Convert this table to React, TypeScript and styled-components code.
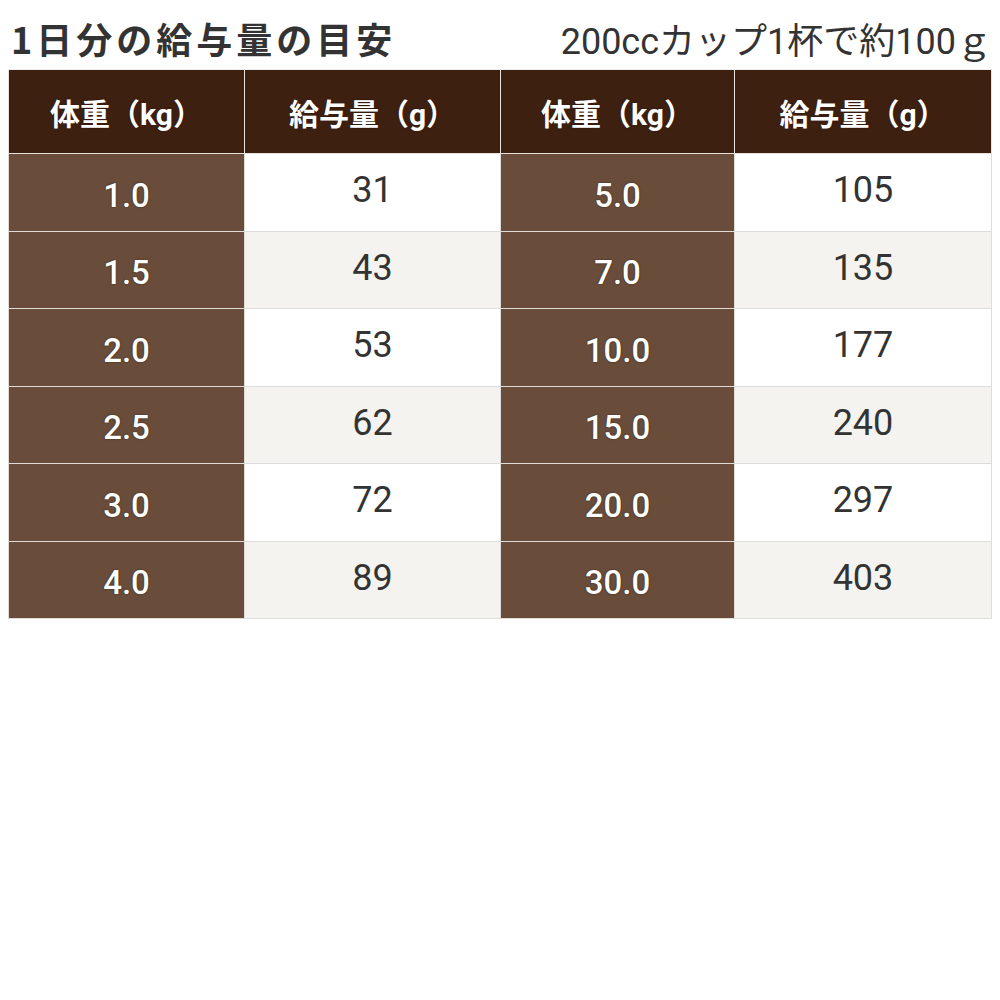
import styled, { createGlobalStyle } from "styled-components";

const rows: [string, string, string, string][] = [
  ["1.0", "31", "5.0", "105"],
  ["1.5", "43", "7.0", "135"],
  ["2.0", "53", "10.0", "177"],
  ["2.5", "62", "15.0", "240"],
  ["3.0", "72", "20.0", "297"],
  ["4.0", "89", "30.0", "403"],
];

const App = () => {
  return (
    <Wrapper>
      <GlobalStyle />
      <TitleRow>
        <Title>1日分の給与量の目安</Title>
        <Note>200ccカップ1杯で約100ｇ</Note>
      </TitleRow>
      <Table>
        <colgroup>
          <col style={{ width: "236px" }} />
          <col style={{ width: "256px" }} />
          <col style={{ width: "234px" }} />
          <col />
        </colgroup>
        <thead>
          <HeadRow>
            <HeadCell>体重（kg）</HeadCell>
            <HeadCell>給与量（g）</HeadCell>
            <HeadCell>体重（kg）</HeadCell>
            <HeadCell>給与量（g）</HeadCell>
          </HeadRow>
        </thead>
        <tbody>
          {rows.map((r, i) => (
            <Row key={i} $shade={i % 2 === 1}>
              <WeightCell>{r[0]}</WeightCell>
              <AmountCell>{r[1]}</AmountCell>
              <WeightCell>{r[2]}</WeightCell>
              <AmountCell>{r[3]}</AmountCell>
            </Row>
          ))}
        </tbody>
      </Table>
    </Wrapper>
  );
};

export default App;

const GlobalStyle = createGlobalStyle`
  body {
    margin: 8px;
    background: #ffffff;
    font-family: Roboto, "Noto Sans CJK JP", sans-serif;
  }
`;

const Wrapper = styled.div`
  width: 984px;
`;

const TitleRow = styled.div`
  display: flex;
  justify-content: space-between;
  align-items: center;
  height: 61px;
  padding: 0 0 2px 3px;
  box-sizing: border-box;
`;

const Title = styled.div`
  font-family: "Noto Sans CJK JP", sans-serif;
  font-weight: 700;
  font-size: 36px;
  letter-spacing: 4px;
  color: #333333;
`;

const Note = styled.div`
  font-family: Roboto, "Noto Sans CJK JP", sans-serif;
  font-weight: 400;
  font-size: 36px;
  color: #333333;
`;

const Table = styled.table`
  width: 100%;
  border-collapse: collapse;
  table-layout: fixed;
`;

const HeadRow = styled.tr`
  height: 84px;
`;

const HeadCell = styled.th`
  padding: 0;
  background: #3e2011;
  color: #ffffff;
  font-family: Roboto, "Noto Sans CJK JP", sans-serif;
  font-weight: 700;
  font-size: 30px;
  text-align: center;
  border: 1px solid #e6e1dc;
  border-top-color: #eeeeee;
  text-shadow: 0 0 2px rgba(0, 0, 0, 0.4);
`;

const Row = styled.tr<{ $shade: boolean }>`
  height: 77.5px;
  background: ${(p) => (p.$shade ? "#f5f3ef" : "#ffffff")};
`;

const WeightCell = styled.td`
  padding: 6px 0 0;
  background: #694c39;
  color: #ffffff;
  font-weight: 500;
  font-size: 33px;
  text-align: center;
  border: 1px solid #e2dcd6;
  text-shadow: 0 0 1px rgba(0, 0, 0, 0.6), 0 0 2px rgba(0, 0, 0, 0.3);
`;

const AmountCell = styled.td`
  padding: 0 0 4px;
  color: #333333;
  font-weight: 400;
  font-size: 36px;
  text-align: center;
  border: 1px solid #dddddd;
`;
